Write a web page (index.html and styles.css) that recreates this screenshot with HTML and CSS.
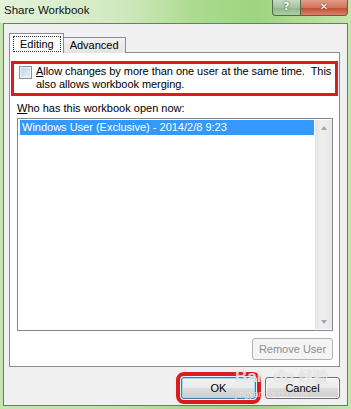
FILE: index.html
```html
<!DOCTYPE html>
<html lang="en">
<head>
  <meta charset="UTF-8">
  <meta name="viewport" content="width=device-width, initial-scale=1.0">
  <title>Share Workbook</title>
  <link rel="stylesheet" href="styles.css">
</head>
<body>
  <div class="window">
    <div class="titlebar">
      <span class="title">Share Workbook</span>
      <div class="caption-buttons">
        <span class="caption-btn help">?</span>
        <span class="caption-btn close">✕</span>
      </div>
    </div>

    <div class="client">
      <div class="tabs">
        <div class="tab active"><span class="focus">Editing</span></div>
        <div class="tab">Advanced</div>
      </div>

      <div class="panel">
        <div class="mark-box">
          <label class="check">
            <span class="check-box"></span>
            <span class="check-text"><u>A</u>llow changes by more than one user at the same time.&nbsp; This<br>also allows workbook merging.</span>
          </label>
        </div>

        <div class="list-label"><u>W</u>ho has this workbook open now:</div>
        <div class="listbox">
          <div class="list-items">
            <div class="list-item selected">Windows User (Exclusive) - 2014/2/8 9:23</div>
          </div>
          <div class="scrollbar">
            <span class="arrow up"></span>
            <span class="arrow down"></span>
          </div>
        </div>

        <div class="panel-actions">
          <button class="btn" disabled>Remove User</button>
        </div>
      </div>

      <div class="dialog-actions">
        <button class="btn default marked">OK</button>
        <button class="btn">Cancel</button>
      </div>

      <!-- baidu watermark over the buttons -->
      <div class="watermark">
        <div class="wm-row">
          <span class="wm-big">Bai</span>
          <span class="wm-big">du</span>
          <span class="wm-cjk">经验</span>
        </div>
        <div class="wm-url">jingyan.baidu.com</div>
      </div>
    </div>
  </div>
</body>
</html>
```

FILE: styles.css
```css
body {
  margin: 0;
  width: 351px;
  height: 409px;
  overflow: hidden;
  font-family: 'Liberation Sans', Arial, sans-serif;
  font-size: 11px;
  color: #000;
  background: linear-gradient(90deg, #c4e4b0 0%, #bde1a4 35%, #a3d886 55%, #9cd47c 72%, #b4dd98 88%, #c2e6ae 100%);
}
.window {
  height: 409px;
  display: flex;
  flex-direction: column;
}

/* title bar */
.titlebar {
  height: 23px;
  flex: none;
  display: flex;
  justify-content: space-between;
  align-items: flex-start;
  padding-left: 4px;
  background: linear-gradient(90deg, rgba(235,246,228,0.8) 0%, rgba(225,241,214,0.6) 30%, rgba(190,226,165,0.3) 55%, rgba(255,255,255,0) 75%);
}
.title {
  font-size: 11.5px;
  line-height: 21px;
  color: #111;
}
.caption-buttons {
  display: flex;
  margin-right: 3px;
}
.caption-btn {
  height: 15px;
  line-height: 14px;
  text-align: center;
  color: #fff;
  font-weight: bold;
  font-family: 'DejaVu Sans', sans-serif;
  border: 1px solid #4f6a4b;
  border-top: none;
  text-shadow: 0 0 2px #333;
}
.help {
  width: 27px;
  font-size: 10px;
  border-right: none;
  border-radius: 0 0 0 4px;
  background: linear-gradient(#c5dcc0, #a3c49c 50%, #8fb487 51%, #b0d0a4);
}
.close {
  width: 46px;
  font-size: 10px;
  border-radius: 0 0 4px 0;
  background: linear-gradient(#e29c88, #d2735c 50%, #c24a32 51%, #d88268);
}

/* client area */
.client {
  flex: 1;
  margin: 0 3px 3px 3px;
  border: 1px solid #6a7d67;
  background: #f0f0f0;
  padding: 9px 7px 0 5px;
  display: flex;
  flex-direction: column;
  position: relative;
}

.tabs {
  display: flex;
  align-items: flex-end;
  margin-bottom: -1px;
  position: relative;
  z-index: 1;
}
.tab {
  height: 15px;
  line-height: 15px;
  padding: 0 6px;
  border: 1px solid #898c95;
  border-bottom: none;
  border-left: none;
  background: linear-gradient(#f2f2f2, #e3e3e3);
}
.tab.active {
  height: 20px;
  padding: 2px 2px 0 3px;
  box-sizing: border-box;
  border-left: 1px solid #898c95;
  background: #fff;
}
.focus {
  display: block;
  height: 16px;
  line-height: 15px;
  padding: 0 6px;
  box-sizing: border-box;
  border: 1px dotted #333;
}

.panel {
  height: 315px;
  box-sizing: border-box;
  border: 1px solid #898c95;
  background: #fff;
  display: flex;
  flex-direction: column;
}

.mark-box {
  margin: 8px 1px 0 1px;
  border: 3px solid #dc1b20;
  padding: 1px 4px 2px 5px;
}
.check {
  display: flex;
  align-items: flex-start;
  gap: 4px;
  line-height: 13px;
}
.check-text {
  white-space: nowrap;
  letter-spacing: -0.05px;
}
.check-box {
  width: 11px;
  height: 11px;
  flex: none;
  margin-top: 1px;
  border: 1px solid #8f8f8f;
  background: linear-gradient(135deg, #bcd2e8, #eaf2fa);
  box-shadow: inset 0 0 0 1px #eef2f6;
}

.list-label {
  margin: 6px 0 0 7px;
  line-height: 13px;
}
.listbox {
  margin: 3px 6px 0 7px;
  height: 213px;
  box-sizing: border-box;
  border: 1px solid #828790;
  display: flex;
  padding: 1px 0 1px 2px;
}
.list-items {
  flex: 1;
}
.list-item {
  height: 15px;
  line-height: 15px;
  padding-left: 2px;
  margin-right: 1px;
}
.list-item.selected {
  background: #3399ff;
  color: #fff;
}
.scrollbar {
  width: 17px;
  display: flex;
  flex-direction: column;
  justify-content: space-between;
  align-items: center;
  padding: 6px 0 5px;
  background: linear-gradient(90deg, #e4e4e4, #efefef 40%, #e8e8e8);
}
.arrow {
  width: 0;
  height: 0;
  border-left: 3px solid transparent;
  border-right: 3px solid transparent;
}
.arrow.up {
  border-bottom: 4px solid #a6a6a6;
}
.arrow.down {
  border-top: 4px solid #a6a6a6;
}

.panel-actions {
  display: flex;
  justify-content: flex-end;
  margin: 7px 6px 0 0;
}

/* buttons */
.btn {
  height: 22px;
  font-family: 'Liberation Sans', Arial, sans-serif;
  font-size: 11px;
  color: #000;
  padding: 0;
  border: 1px solid #707070;
  border-radius: 3px;
  background: linear-gradient(#f2f2f2 0%, #ebebeb 50%, #dddddd 51%, #cfcfcf 100%);
  box-shadow: inset 0 0 0 1px #fbfbfb;
}
.panel-actions .btn {
  width: 81px;
}
.btn:disabled {
  color: #8d8d8d;
  border-color: #adb2b5;
  background: #f4f4f4;
  box-shadow: none;
}
.btn.default {
  border-color: #3c7fb1;
  box-shadow: inset 0 0 0 1px #9edcf2;
}
.btn.marked {
  outline: 4px solid #dc1b20;
  outline-offset: 1px;
}

.dialog-actions {
  display: flex;
  justify-content: flex-end;
  gap: 9px;
  margin-top: 10px;
}
.dialog-actions .btn {
  width: 75px;
}

.watermark {
  position: absolute;
  left: 231px;
  top: 343px;
  color: rgba(255,255,255,0.7);
  text-shadow: 0 0 1px rgba(150,150,150,0.6);
  pointer-events: none;
}
.wm-row {
  display: flex;
  align-items: baseline;
  gap: 12px;
  line-height: 17px;
}
.wm-big {
  font-size: 17px;
  font-weight: bold;
}
.wm-cjk {
  font-family: 'Noto Sans CJK SC', sans-serif;
  font-size: 15px;
  margin-left: -8px;
}
.wm-url {
  font-size: 9px;
  line-height: 10px;
  margin-top: 4px;
}
```
